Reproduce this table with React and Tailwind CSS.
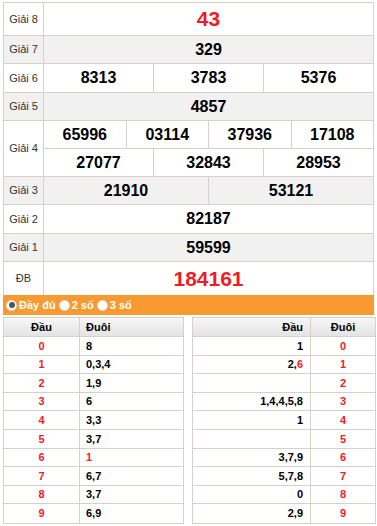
import React from "react";

const B = "border-[#d6d0c8]";

function Row({ label, h, gray, children }) {
  return (
    <div className={`flex border-b ${B} ${gray ? "bg-[#f1f1f1]" : "bg-white"}`}>
      <div className={`w-[40px] shrink-0 border-r ${B} flex items-center justify-center text-[11px] text-[#333]`}>{label}</div>
      <div className="flex-1 flex flex-col">{children}</div>
    </div>
  );
}

function Cells({ vals, h, cls = "text-[16px] text-black", last }) {
  return (
    <div className={`flex ${h} ${last ? "" : `border-b ${B}`}`}>
      {vals.map((v, i) => (
        <div key={i} className={`flex-1 flex items-center justify-center font-bold ${cls} ${i > 0 ? `border-l ${B}` : ""}`}>{v}</div>
      ))}
    </div>
  );
}

const left = [
  ["0", "8"], ["1", "0,3,4"], ["2", "1,9"], ["3", "6"], ["4", "3,3"],
  ["5", "3,7"], ["6", <span className="text-[#ee1c25]">1</span>], ["7", "6,7"], ["8", "3,7"], ["9", "6,9"],
];
const right = [
  ["1", "0"], [<>2,<span className="text-[#ee1c25]">6</span></>, "1"], ["", "2"], ["1,4,4,5,8", "3"], ["1", "4"],
  ["", "5"], ["3,7,9", "6"], ["5,7,8", "7"], ["0", "8"], ["2,9", "9"],
];

function Radio({ checked, label }) {
  return (
    <span className="flex items-center gap-[2px] mr-[3px]">
      <span className="w-[11px] h-[11px] rounded-full bg-white border border-[#e0e0e0] flex items-center justify-center">
        {checked && <span className="w-[6px] h-[6px] rounded-full bg-[#4a5a4a]" />}
      </span>
      <span className="text-white font-bold text-[11px]">{label}</span>
    </span>
  );
}

export default function App() {
  return (
    <div className="w-[377px] h-[526px] bg-white overflow-hidden" style={{ fontFamily: "'Liberation Sans', Arial, sans-serif" }}>
      <div className={`ml-[3px] mt-[2px] w-[371px] border-t border-l border-r ${B}`}>
        <Row label="Giải 8">
          <Cells vals={["43"]} h="h-[32px]" cls="text-[21px] text-[#ee1c25]" last />
        </Row>
        <Row label="Giải 7" gray>
          <Cells vals={["329"]} h="h-[27px]" last />
        </Row>
        <Row label="Giải 6">
          <Cells vals={["8313", "3783", "5376"]} h="h-[28px]" last />
        </Row>
        <Row label="Giải 5" gray>
          <Cells vals={["4857"]} h="h-[27px]" last />
        </Row>
        <Row label="Giải 4">
          <Cells vals={["65996", "03114", "37936", "17108"]} h="h-[28px]" />
          <Cells vals={["27077", "32843", "28953"]} h="h-[27px]" last />
        </Row>
        <Row label="Giải 3" gray>
          <Cells vals={["21910", "53121"]} h="h-[27px]" last />
        </Row>
        <Row label="Giải 2">
          <Cells vals={["82187"]} h="h-[28px]" last />
        </Row>
        <Row label="Giải 1" gray>
          <Cells vals={["59599"]} h="h-[27px]" last />
        </Row>
        <div className="flex bg-white h-[33px]">
          <div className={`w-[40px] shrink-0 border-r ${B} flex items-center justify-center text-[11px] text-[#333]`}>ĐB</div>
          <div className="flex-1 flex items-center justify-center font-bold text-[21px] text-[#ee1c25]">184161</div>
        </div>
      </div>
      <div className="ml-[3px] w-[371px] h-[20px] bg-[#f89a31] flex items-center pl-[3px]">
        <Radio checked label="Đầy đủ" />
        <Radio label="2 số" />
        <Radio label="3 số" />
      </div>
      <div className="flex mt-[2px] ml-[3px] gap-[8px]">
        <div className={`w-[181px] border ${B}`}>
          <div className={`flex h-[19px] border-b ${B} bg-gradient-to-b from-[#f7f7f7] to-[#e4e4e4] text-[11px] font-bold text-black`}>
            <div className={`w-[76px] border-r ${B} flex items-center justify-center`}>Đầu</div>
            <div className="flex-1 flex items-center pl-[6px]">Đuôi</div>
          </div>
          {left.map(([d, t], i) => (
            <div key={i} className={`flex h-[18.6px] text-[11px] font-bold ${i < 9 ? `border-b ${B}` : ""}`}>
              <div className={`w-[76px] border-r ${B} flex items-center justify-center text-[#ee1c25]`}>{d}</div>
              <div className="flex-1 flex items-center pl-[6px] text-black">{t}</div>
            </div>
          ))}
        </div>
        <div className={`w-[184px] border ${B}`}>
          <div className={`flex h-[19px] border-b ${B} bg-gradient-to-b from-[#f7f7f7] to-[#e4e4e4] text-[11px] font-bold text-black`}>
            <div className={`w-[118px] border-r ${B} flex items-center justify-end pr-[7px]`}>Đầu</div>
            <div className="flex-1 flex items-center justify-center">Đuôi</div>
          </div>
          {right.map(([d, t], i) => (
            <div key={i} className={`flex h-[18.6px] text-[11px] font-bold ${i < 9 ? `border-b ${B}` : ""}`}>
              <div className={`w-[118px] border-r ${B} flex items-center justify-end pr-[7px] text-black`}>{d}</div>
              <div className="flex-1 flex items-center justify-center text-[#ee1c25]">{t}</div>
            </div>
          ))}
        </div>
      </div>
    </div>
  );
}
